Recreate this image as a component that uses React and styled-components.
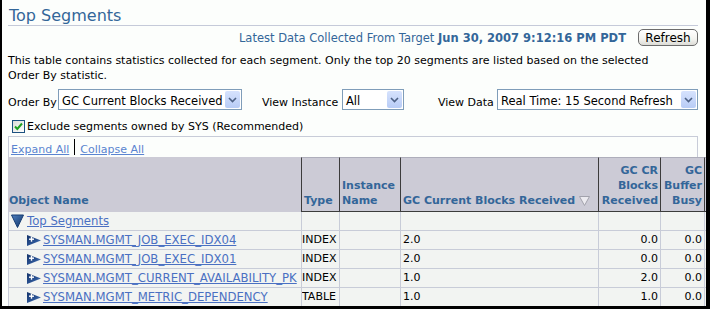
import React from 'react';
import styled, { createGlobalStyle } from 'styled-components';

const GlobalStyle = createGlobalStyle`
  html, body { margin: 0; padding: 0; background: #000; }
  body { font-family: "DejaVu Sans", Verdana, sans-serif; font-size: 11px; color: #000; }
  #root { width: 710px; height: 309px; }
`;

const Frame = styled.div`
  width: 710px;
  height: 309px;
  box-sizing: border-box;
  border-left: 2px solid #000;
  border-right: 4px solid #000;
  border-bottom: 3px solid #000;
  background: #fcfefc;
  overflow: hidden;
  padding: 0 8px 0 6px;
`;

const Title = styled.h1`
  margin: 0;
  padding: 7px 0 0 1px;
  font-size: 16px;
  font-weight: normal;
  line-height: 18px;
  color: #336699;
  border-bottom: 1px solid #c5cad9;
`;

const InfoRow = styled.div`
  display: flex;
  justify-content: flex-end;
  align-items: center;
  margin-top: 3px;
  height: 17px;
  gap: 12px;
  color: #336699;
  font-size: 11.5px;
  white-space: nowrap;
`;

const Strong = styled.b`
  font-weight: bold;
`;

const Button = styled.button`
  width: 60px;
  height: 17px;
  padding: 0;
  box-sizing: border-box;
  border: 1px solid #6c6c6c;
  border-radius: 5px;
  background: linear-gradient(#ffffff, #f3f3ef 60%, #dcdcd6);
  font-family: "DejaVu Sans", Verdana, sans-serif;
  font-size: 12px;
  line-height: 14px;
  color: #000;
`;

const Desc = styled.p`
  margin: 7px 0 0;
  max-width: 666px;
  line-height: 15px;
`;

const Controls = styled.div`
  display: flex;
  align-items: flex-end;
  margin-top: 6px;
  height: 21px;
`;

const Field = styled.div`
  display: flex;
  align-items: flex-end;
  margin-left: ${p => p.$ml || 0}px;
`;

const Label = styled.span`
  width: ${p => p.$w}px;
  line-height: 15px;
  white-space: nowrap;
`;

const Select = styled.div`
  width: ${p => p.$w}px;
  height: 21px;
  box-sizing: border-box;
  border: 1px solid #7f9db9;
  background: #fff;
  display: flex;
  align-items: center;
`;

const SelectText = styled.span`
  flex: 1;
  padding: 2px 0 0 3px;
  font-size: 11.5px;
  white-space: nowrap;
  overflow: hidden;
`;

const ArrowBtn = styled.span`
  width: 15px;
  height: 17px;
  margin-right: 1px;
  border-radius: 2px;
  background: linear-gradient(#d6e2fd, #b8ccf6);
  display: flex;
  align-items: center;
  justify-content: center;
`;

const CheckRow = styled.div`
  display: flex;
  align-items: center;
  margin-top: 9px;
  height: 15px;
  padding-left: 4px;
  gap: 2px;
`;

const CheckBox = styled.span`
  width: 13px;
  height: 13px;
  box-sizing: border-box;
  border: 1px solid #1c5180;
  background: linear-gradient(135deg, #dcdcd7, #ffffff);
  display: flex;
  align-items: center;
  justify-content: center;
`;

const Box = styled.div`
  margin-top: 2px;
  border: 1px solid #c8ccd8;
  border-bottom: none;
`;

const LinkBar = styled.div`
  height: 20px;
  display: flex;
  align-items: flex-end;
  padding-left: 2px;
  line-height: 15px;
`;

const Link = styled.a`
  color: ${p => p.$light ? '#5a84d0' : '#4a70c2'};
  text-decoration: underline;
  font-size: ${p => p.$big ? '11.7px' : '11px'};
  white-space: nowrap;
  cursor: pointer;
`;

const Sep = styled.span`
  width: 1px;
  height: 16px;
  background: #000;
  margin: 0 5px 2px 5px;
`;

const Table = styled.table`
  margin-left: -1px;
  table-layout: fixed;
  width: 760px;
  border-collapse: separate;
  border-spacing: 0;
`;

const Th = styled.th`
  background: #cccbd6;
  color: #336699;
  font-weight: bold;
  font-size: 11px;
  line-height: 15px;
  vertical-align: bottom;
  text-align: ${p => p.$right ? 'right' : 'left'};
  padding: 5px 2px 3px ${p => p.$first ? 1 : 2}px;
  border-top: 1px solid ${p => p.$first ? '#cccbd6' : '#aeaebb'};
  border-left: ${p => p.$first ? 'none' : '1px solid #3c3c3c'};
  border-bottom: 1px solid ${p => p.$first ? '#cccbd6' : '#3c3c3c'};
  white-space: nowrap;
  overflow: hidden;
`;

const SortWrap = styled.span`
  display: inline-flex;
  align-items: center;
  gap: 4px;
`;

const Td = styled.td`
  background: #f2f4f2;
  border-left: 1px solid #c8ccd8;
  border-bottom: 1px solid #c8ccd8;
  padding: 0 ${p => p.$right ? 2 : 1}px 0 ${p => p.$pl ?? 1}px;
  line-height: 18px;
  height: 18px;
  text-align: ${p => p.$right ? 'right' : 'left'};
  white-space: nowrap;
  overflow: hidden;
  vertical-align: middle;
`;

const NameCell = styled.div`
  display: flex;
  align-items: center;
  gap: ${p => p.$gap}px;
  padding-left: ${p => p.$indent}px;
`;

const ChevronDown = () => (
  <svg width="9" height="6" viewBox="0 0 9 6">
    <polyline points="1,1 4.5,4.5 8,1" fill="none" stroke="#4d6185" strokeWidth="1.6" />
  </svg>
);

const Check = () => (
  <svg width="11" height="11" viewBox="0 0 11 11">
    <polyline points="2,5.5 4.3,8 9,2.5" fill="none" stroke="#21a121" strokeWidth="2" />
  </svg>
);

const ExpandedIcon = () => (
  <svg width="13" height="14" viewBox="0 0 13 14">
    <defs>
      <linearGradient id="exg" x1="0" y1="0" x2="1" y2="1">
        <stop offset="0" stopColor="#4f7fbf" />
        <stop offset="1" stopColor="#0f3468" />
      </linearGradient>
    </defs>
    <polygon points="0.5,1 12.5,1 6.5,13.5" fill="url(#exg)" stroke="#163c72" strokeWidth="1" />
  </svg>
);

const CollapsedIcon = () => (
  <svg width="14" height="11" viewBox="0 0 14 11">
    <defs>
      <linearGradient id="clg" x1="0" y1="0" x2="1" y2="1">
        <stop offset="0" stopColor="#14336a" />
        <stop offset="0.6" stopColor="#2c5596" />
        <stop offset="1" stopColor="#6a95d0" />
      </linearGradient>
    </defs>
    <polygon points="0,0 14,5.5 0,11" fill="url(#clg)" />
    <rect x="2" y="3.5" width="5" height="1.4" fill="#fff" />
    <rect x="3.8" y="1.7" width="1.4" height="5" fill="#fff" />
  </svg>
);

const SortIcon = () => (
  <svg width="11" height="10" viewBox="0 0 11 10">
    <polygon points="0.5,0.5 10.5,0.5 5.5,9.5" fill="#ecebf0" stroke="#a2a2ac" strokeWidth="1" />
  </svg>
);

const Dropdown = ({ w, children }) => (
  <Select $w={w}>
    <SelectText>{children}</SelectText>
    <ArrowBtn><ChevronDown /></ArrowBtn>
  </Select>
);

const rows = [
  { name: 'SYSMAN.MGMT_JOB_EXEC_IDX04', type: 'INDEX', cur: '2.0', cr: '0.0', busy: '0.0' },
  { name: 'SYSMAN.MGMT_JOB_EXEC_IDX01', type: 'INDEX', cur: '2.0', cr: '0.0', busy: '0.0' },
  { name: 'SYSMAN.MGMT_CURRENT_AVAILABILITY_PK', type: 'INDEX', cur: '1.0', cr: '2.0', busy: '0.0' },
  { name: 'SYSMAN.MGMT_METRIC_DEPENDENCY', type: 'TABLE', cur: '1.0', cr: '1.0', busy: '0.0' },
];

export default function App() {
  return (
    <>
      <GlobalStyle />
      <Frame>
        <Title>Top Segments</Title>
        <InfoRow>
          <span>Latest Data Collected From Target <Strong>Jun 30, 2007 9:12:16 PM PDT</Strong></span>
          <Button>Refresh</Button>
        </InfoRow>
        <Desc>
          This table contains statistics collected for each segment. Only the top 20 segments are listed based on the selected Order By statistic.
        </Desc>
        <Controls>
          <Field>
            <Label $w={50}>Order By</Label>
            <Dropdown w={184}>GC Current Blocks Received</Dropdown>
          </Field>
          <Field $ml={20}>
            <Label $w={80}>View Instance</Label>
            <Dropdown w={62}>All</Dropdown>
          </Field>
          <Field $ml={34}>
            <Label $w={59}>View Data</Label>
            <Dropdown w={201}>Real Time: 15 Second Refresh</Dropdown>
          </Field>
        </Controls>
        <CheckRow>
          <CheckBox><Check /></CheckBox>
          <span>Exclude segments owned by SYS (Recommended)</span>
        </CheckRow>
        <Box>
          <LinkBar>
            <Link $light>Expand All</Link>
            <Sep />
            <Link $light>Collapse All</Link>
          </LinkBar>
          <Table>
            <colgroup>
              <col style={{ width: 293 }} />
              <col style={{ width: 38 }} />
              <col style={{ width: 61 }} />
              <col style={{ width: 198 }} />
              <col style={{ width: 62 }} />
              <col style={{ width: 44 }} />
              <col style={{ width: 64 }} />
            </colgroup>
            <thead>
              <tr>
                <Th $first>Object Name</Th>
                <Th>Type</Th>
                <Th>Instance<br />Name</Th>
                <Th>
                  <SortWrap>GC Current Blocks Received<SortIcon /></SortWrap>
                </Th>
                <Th $right>GC CR<br />Blocks<br />Received</Th>
                <Th $right>GC<br />Buffer<br />Busy</Th>
                <Th />
              </tr>
            </thead>
            <tbody>
              <tr>
                <Td $pl={2}>
                  <NameCell $gap={3} $indent={0}>
                    <ExpandedIcon />
                    <Link $big>Top Segments</Link>
                  </NameCell>
                </Td>
                <Td />
                <Td />
                <Td />
                <Td />
                <Td />
                <Td />
              </tr>
              {rows.map(r => (
                <tr key={r.name}>
                  <Td $pl={1}>
                    <NameCell $gap={2} $indent={17}>
                      <CollapsedIcon />
                      <Link $big>{r.name}</Link>
                    </NameCell>
                  </Td>
                  <Td $pl={0}>{r.type}</Td>
                  <Td />
                  <Td $pl={2}>{r.cur}</Td>
                  <Td $right>{r.cr}</Td>
                  <Td $right>{r.busy}</Td>
                  <Td />
                </tr>
              ))}
            </tbody>
          </Table>
        </Box>
      </Frame>
    </>
  );
}
